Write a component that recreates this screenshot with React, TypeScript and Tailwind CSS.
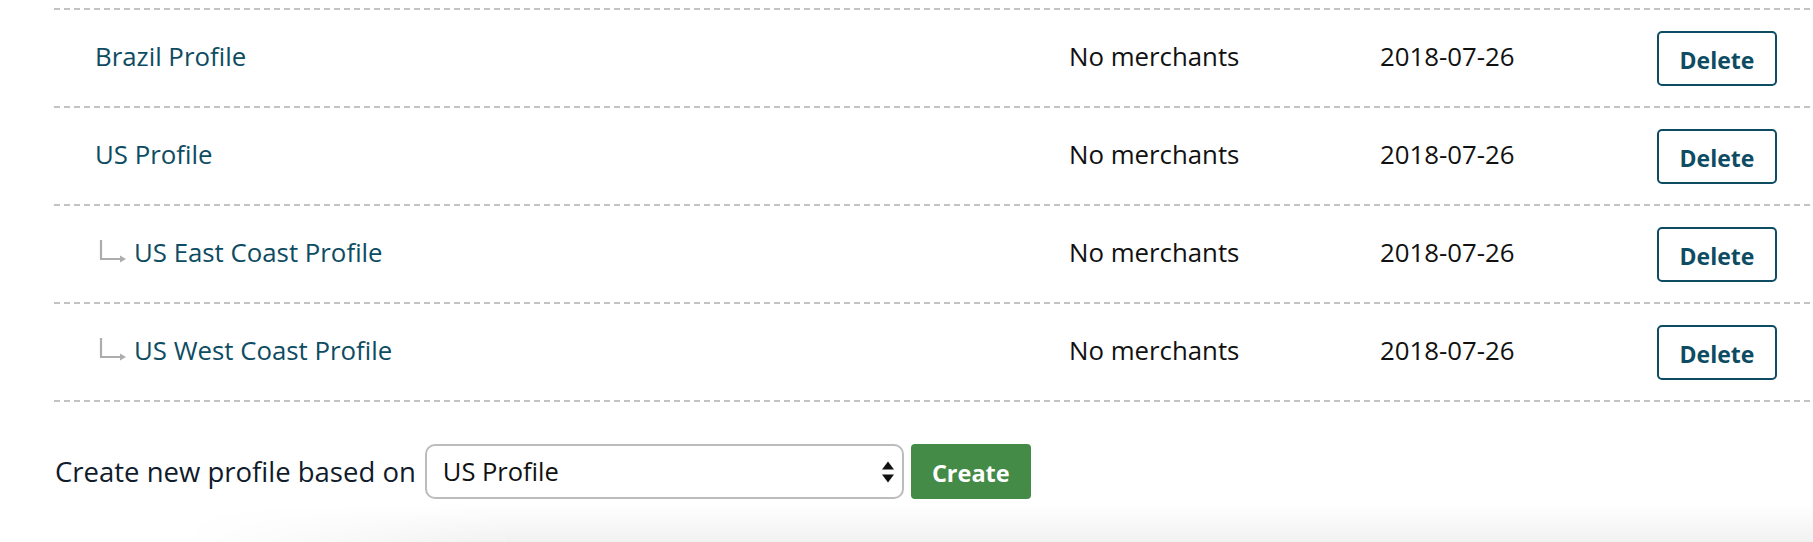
const profiles = [
  { name: "Brazil Profile", child: false },
  { name: "US Profile", child: false },
  { name: "US East Coast Profile", child: true },
  { name: "US West Coast Profile", child: true },
];

function Rule() {
  return (
    <div className="h-[2px] w-full bg-[repeating-linear-gradient(to_right,#c3c3c3_0px,#c3c3c3_6px,transparent_6px,transparent_10px)]" />
  );
}

function ChildArrow() {
  return (
    <svg width="28" height="25" viewBox="0 0 28 25" className="mr-[7px] ml-[4px] -mt-[3px] shrink-0" aria-hidden>
      <path d="M2 1 V20 H22" fill="none" stroke="#adadad" strokeWidth="2.2" />
      <path d="M21 16.5 L27 20 L21 23.5 Z" fill="#adadad" />
    </svg>
  );
}

function Stepper() {
  return (
    <svg width="12" height="22" viewBox="0 0 12 22" aria-hidden>
      <path d="M0 8.5 L6 0.5 L12 8.5 Z" fill="#111" />
      <path d="M0 13.5 L12 13.5 L6 21.5 Z" fill="#111" />
    </svg>
  );
}

export default function App() {
  return (
    <div className="flex h-[542px] w-full flex-col overflow-hidden bg-white pt-[8px] font-['Open_Sans',sans-serif]">
      <div className="pl-[54px]">
        {profiles.map((p) => (
          <div key={p.name}>
            <Rule />
            <div className="flex h-[96px] items-center">
              <div className="flex w-[1015px] items-center pl-[41px] pb-[3px]">
                {p.child && <ChildArrow />}
                <a className="text-[25.8px] text-[#0d4c62]">{p.name}</a>
              </div>
              <div className="w-[311px] pb-[3px] text-[25.8px] text-[#111]">No merchants</div>
              <div className="w-[277px] pb-[3px] text-[25.8px] text-[#111]">2018-07-26</div>
              <button className="h-[55px] w-[120px] rounded-[5px] border-2 border-[#0d4c62] bg-white pt-[4px] text-[23px] font-bold text-[#0d4c62]">
                Delete
              </button>
            </div>
          </div>
        ))}
        <Rule />
      </div>

      <div className="mt-[42px] flex items-center pl-[55px]">
        <span className="mr-[9px] text-[27.5px] text-[#101b2b]">Create new profile based on</span>
        <div className="flex h-[55px] w-[479px] items-center justify-between rounded-[10px] border-2 border-[#bcbcbc] bg-white pr-[8px] pl-[16px]">
          <span className="text-[25.5px] text-[#111]">US Profile</span>
          <Stepper />
        </div>
        <button className="ml-[7px] h-[55px] w-[120px] rounded-[4px] bg-[#448b48] pt-[4px] text-[23.5px] font-bold text-white">
          Create
        </button>
      </div>

      <div className="mt-[6px] flex-1 bg-[linear-gradient(to_bottom,#ffffff,#f1f1f1)] [mask-image:linear-gradient(to_right,transparent_180px,black_520px)]" />
    </div>
  );
}
